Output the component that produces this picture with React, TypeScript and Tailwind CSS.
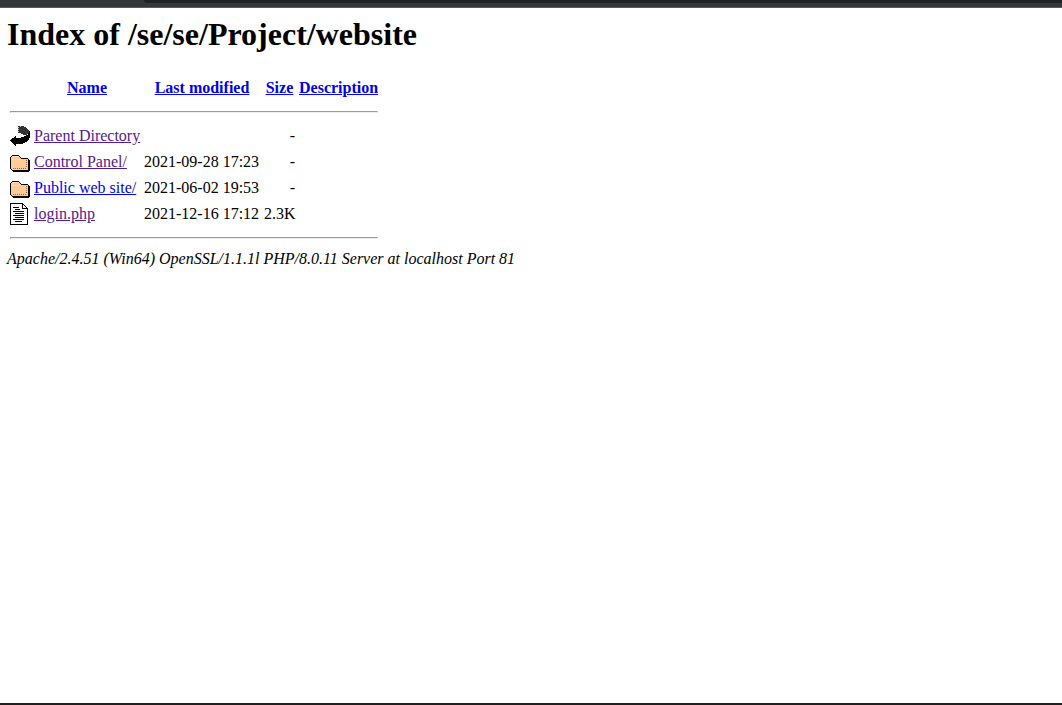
import type { ReactNode } from "react";

const BackIcon = () => (
  <svg className="block" width="20" height="22" viewBox="0 0 20 22" shapeRendering="crispEdges">
    <path d="M8 1h6v1h2v1h1v1h1v1h1v4h-2v1h-4V9h-2V8H8z" fill="#333" />
    <path d="M8 2h1v1H8zM8 4h1v1H8zM8 6h1v1H8zM10 1h1v1h-1z" fill="#bbb" />
    <path d="M19 6h1v7h-1v2h-1v1h-1v1h-2v1h-2v1H6v2H5v-1H4v-1H3v-1H2v-1H1v-1H0v-1h1v-1h1v-1h2v-1h1v-1h1v2h5v-1h3v-1h2v-1h2V8h1z" fill="#000" />
  </svg>
);

const FolderIcon = () => (
  <svg className="block" width="20" height="22" viewBox="0 0 20 22" shapeRendering="crispEdges">
    <path d="M2 4h7v1h1v1h1v1h7v1h1v1h1v11h-1v1H3v-1H2v-1H1v-1H0V6h1V5h1z" fill="#000" />
    <path d="M2 5h7v1h1v1h1v1h7v11H2v-1H1V6h1z" fill="#fc9" />
    <path d="M2 5h7v1H2zM1 8h9v1H1z" fill="#ffdcb8" />
    <path d="M16 9h1v1h-1zM16 11h1v1h-1zM16 13h1v1h-1zM16 15h1v1h-1zM15 17h1v1h-1zM13 17h1v1h-1zM11 17h1v1h-1zM9 17h1v1H9zM7 17h1v1H7zM5 17h1v1H5zM3 17h1v1H3z" fill="#996633" />
  </svg>
);

const TextIcon = () => (
  <svg className="block" width="20" height="22" viewBox="0 0 20 22" shapeRendering="crispEdges">
    <path d="M0 0h13v1h1v1h1v1h1v1h1v1h1v17H0z" fill="#000" />
    <path d="M1 1h11v5h5v15H1z" fill="#fff" />
    <path d="M13 2h1v1h1v1h1v1h-3z" fill="#fff" />
    <path d="M3 4h6v1H3zM5 6h5v1H5zM3 8h11v1H3zM5 10h9v1H5zM3 12h11v1H3zM5 14h9v1H5zM3 16h11v1H3zM5 18h7v1H5z" fill="#000" />
  </svg>
);

type Row = { icon: ReactNode; name: string; date: string; size: string; visited: boolean };

const rows: Row[] = [
  { icon: <BackIcon />, name: "Parent Directory", date: "", size: "-", visited: true },
  { icon: <FolderIcon />, name: "Control Panel/", date: "2021-09-28 17:23", size: "-", visited: true },
  { icon: <FolderIcon />, name: "Public web site/", date: "2021-06-02 19:53", size: "-", visited: false },
  { icon: <TextIcon />, name: "login.php", date: "2021-12-16 17:12", size: "2.3K", visited: true },
];

const Rule = () => (
  <tr>
    <th colSpan={5} className="p-px">
      <hr className="my-2 h-0.5 border border-t-[#9a9a9a] border-r-[#eee] border-b-[#eee] border-l-[#9a9a9a]" />
    </th>
  </tr>
);

export default function App() {
  return (
    <div className="flex h-[705px] flex-col overflow-hidden bg-white font-['Liberation_Serif',serif] text-base leading-[18px] text-black">
      <div className="flex h-2 shrink-0 flex-col border-b border-[#5b5b5e] bg-[#35363a]">
        <div className="ml-[144px] h-[3px] rounded-bl-[8px] bg-[#202124]" />
      </div>
      <main className="grow pl-[7px]">
        <h1 className="pt-2 text-[32px] leading-[37px] font-bold">Index of /se/se/Project/website</h1>
        <table className="mt-[21px] w-[374px] table-fixed border-separate border-spacing-[2px] whitespace-nowrap">
          <colgroup>
            <col className="w-[22px]" />
            <col className="w-[108px]" />
            <col className="w-[118px]" />
            <col className="w-[33px]" />
            <col className="w-[81px]" />
          </colgroup>
          <tbody>
            <tr className="h-6 text-[#0000ee]">
              <th className="p-px" />
              {["Name", "Last modified", "Size", "Description"].map((h) => (
                <th key={h} className="p-px text-center font-bold">
                  <a href="#" className="underline">{h}</a>
                </th>
              ))}
            </tr>
            <Rule />
            {rows.map((r) => (
              <tr key={r.name} className="h-6">
                <td className="p-px">{r.icon}</td>
                <td className="p-px">
                  <a href="#" className={r.visited ? "text-[#551a8b] underline" : "text-[#0000ee] underline"}>
                    {r.name}
                  </a>
                </td>
                <td className="p-px">{r.date}</td>
                <td className="p-px text-right">{r.size}</td>
                <td className="p-px" />
              </tr>
            ))}
            <Rule />
          </tbody>
        </table>
        <address className="italic">Apache/2.4.51 (Win64) OpenSSL/1.1.1l PHP/8.0.11 Server at localhost Port 81</address>
      </main>
      <div className="h-0.5 shrink-0 bg-[#202020]" />
    </div>
  );
}
